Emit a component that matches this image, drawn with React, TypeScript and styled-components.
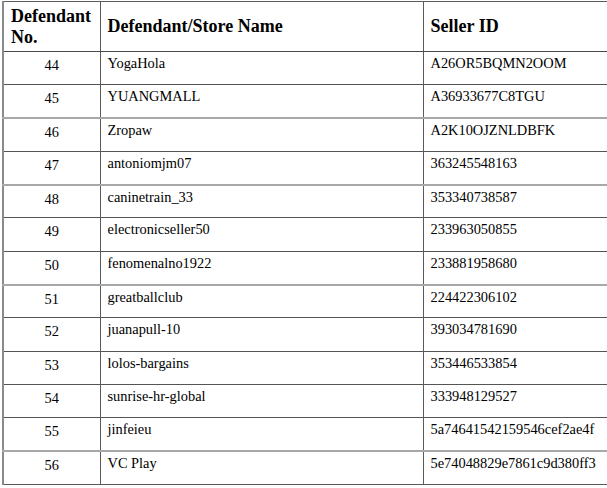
import React from "react";
import styled, { createGlobalStyle } from "styled-components";

const Global = createGlobalStyle`
  html, body { margin: 0; padding: 0; background: #ffffff; }
  body { font-family: "Liberation Serif", "Times New Roman", serif; color: #000; }
`;

const Page = styled.div`
  padding: 1px 1px 0 2px;
  width: 607px;
  box-sizing: border-box;
`;

const Table = styled.table`
  width: 604px;
  border-collapse: collapse;
  table-layout: fixed;
  border: 1px solid #5a5a5a;
  border-left: 2px solid #8a8a8a;
`;

const HeadCell = styled.th<{ $w: number }>`
  width: ${(p) => p.$w}px;
  height: 50px;
  padding: 0 0 0 7px;
  box-sizing: border-box;
  text-align: left;
  vertical-align: middle;
  font-weight: bold;
  font-size: 18px;
  line-height: 21px;
  border-right: 1px solid #5a5a5a;
  border-bottom: 1px solid #4a4a4a;
`;

const Row = styled.tr<{ $light?: boolean }>`
  height: 33.3px;
  & > td {
    border-top: ${(p) => (p.$light ? "2px solid #a8a8a8" : "1px solid #555555")};
  }
`;

const Cell = styled.td<{ $center?: boolean }>`
  padding: ${(p) => (p.$center ? "5px 0 0 0" : "3px 0 0 7px")};
  vertical-align: top;
  text-align: ${(p) => (p.$center ? "center" : "left")};
  font-size: 14.4px;
  line-height: 17px;
  border-right: 1px solid #5a5a5a;
  white-space: nowrap;
  overflow: hidden;
`;

const rows: [string, string, string, boolean?][] = [
  ["44", "YogaHola", "A26OR5BQMN2OOM"],
  ["45", "YUANGMALL", "A36933677C8TGU"],
  ["46", "Zropaw", "A2K10OJZNLDBFK", true],
  ["47", "antoniomjm07", "363245548163"],
  ["48", "caninetrain_33", "353340738587", true],
  ["49", "electronicseller50", "233963050855"],
  ["50", "fenomenalno1922", "233881958680"],
  ["51", "greatballclub", "224422306102", true],
  ["52", "juanapull-10", "393034781690"],
  ["53", "lolos-bargains", "353446533854"],
  ["54", "sunrise-hr-global", "333948129527"],
  ["55", "jinfeieu", "5a74641542159546cef2ae4f"],
  ["56", "VC Play", "5e74048829e7861c9d380ff3", true],
];

export default function App() {
  return (
    <Page>
      <Global />
      <Table>
        <thead>
          <tr>
            <HeadCell $w={97}>
              Defendant
              <br />
              No.
            </HeadCell>
            <HeadCell $w={323}>Defendant/Store Name</HeadCell>
            <HeadCell $w={184}>Seller ID</HeadCell>
          </tr>
        </thead>
        <tbody>
          {rows.map(([no, name, id, light]) => (
            <Row key={no} $light={light}>
              <Cell $center>{no}</Cell>
              <Cell>{name}</Cell>
              <Cell>{id}</Cell>
            </Row>
          ))}
        </tbody>
      </Table>
    </Page>
  );
}
